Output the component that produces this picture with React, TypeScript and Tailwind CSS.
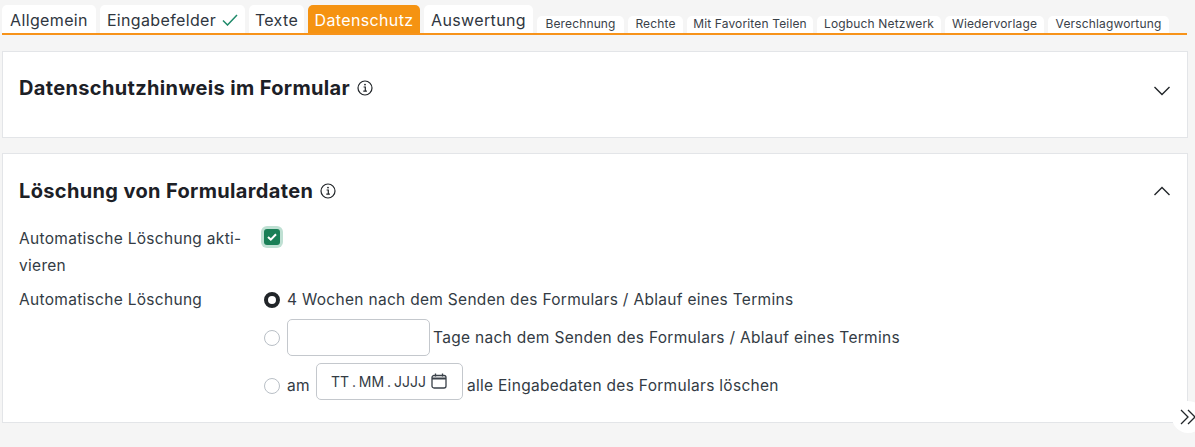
import React from "react";

const big = [
  { t: "Allgemein", w: "w-[94px]" },
  { t: "Eingabefelder", w: "w-[145px]", check: true },
  { t: "Texte", w: "w-[55px]" },
  { t: "Datenschutz", w: "w-[112px]", active: true },
  { t: "Auswertung", w: "w-[109px]" },
];
const small = [
  { t: "Berechnung", w: "w-[87px]" },
  { t: "Rechte", w: "w-[55px]" },
  { t: "Mit Favoriten Teilen", w: "w-[126px]" },
  { t: "Logbuch Netzwerk", w: "w-[124px]" },
  { t: "Wiedervorlage", w: "w-[99px]" },
  { t: "Verschlagwortung", w: "w-[121px]" },
];

function Info() {
  return (
    <svg width="16" height="16" viewBox="0 0 16 16" fill="none" stroke="#212529" className="shrink-0">
      <circle cx="8" cy="8" r="7" strokeWidth="1.2" />
      <path d="M6.6 7h1.7v4M6.3 11.2h3.6" strokeWidth="1.2" />
      <circle cx="8" cy="4.6" r="0.9" fill="#212529" stroke="none" />
    </svg>
  );
}

function Chevron({ up }: { up?: boolean }) {
  return (
    <svg width="16" height="10" viewBox="0 0 16 10" fill="none" stroke="#212529" strokeWidth="1.4" className="shrink-0">
      <path d={up ? "M0.5 9 8 1.5 15.5 9" : "M0.5 1 8 8.5 15.5 1"} />
    </svg>
  );
}

function Radio({ checked }: { checked?: boolean }) {
  return checked ? (
    <span className="w-4 h-4 rounded-full border-[4.5px] border-[#212529] bg-white shrink-0" />
  ) : (
    <span className="w-4 h-4 rounded-full border border-[#b9bfc6] bg-white shrink-0" />
  );
}

export default function App() {
  return (
    <div className="relative h-[447px] w-[1195px] overflow-hidden bg-[#f5f5f5] pt-[5px] text-[#333b44] font-['Inter','Liberation_Sans',sans-serif]">
      <div className="ml-[2px] flex h-[30px] w-[1185px] items-end border-b-2 border-[#f7931a]">
        <div className="flex items-end gap-[4px]">
          {big.map((b) => (
            <div
              key={b.t}
              className={`${b.w} flex h-[28px] items-center justify-center gap-[6px] rounded-t-[5px] pt-[1px] text-[16px] tracking-[0.35px] ${
                b.active ? "bg-[#f59312] text-white" : "bg-white text-[#2f3640]"
              }`}
            >
              {b.t}
              {b.check && (
                <svg width="16" height="12" viewBox="0 0 16 12" fill="none" stroke="#1f8a6a" strokeWidth="1.5">
                  <path d="M1 6.5 5.5 11 15 1" />
                </svg>
              )}
            </div>
          ))}
        </div>
        <div className="ml-[4px] flex items-end gap-[4px]">
          {small.map((b) => (
            <div
              key={b.t}
              className={`${b.w} flex h-[17px] items-center justify-center rounded-t-[5px] bg-white pb-[2px] text-[12px] tracking-[0.15px] text-[#3a4149]`}
            >
              {b.t}
            </div>
          ))}
        </div>
      </div>

      <section className="mx-[2px] mt-[16px] flex h-[87px] w-[1186px] items-start justify-between border border-[#e3e5e8] bg-white pl-[16px] pr-[17px] pt-[24px]">
        <h2 className="flex items-center gap-[7px] text-[20px] leading-[24px] font-bold tracking-[0.35px] text-[#1c2026]">
          Datenschutzhinweis im Formular <Info />
        </h2>
        <div className="mt-[10px]">
          <Chevron />
        </div>
      </section>

      <section className="mx-[2px] mt-[15px] h-[270px] w-[1186px] border border-[#e3e5e8] bg-white pl-[16px] pr-[17px] pt-[25px]">
        <div className="flex items-start justify-between">
          <h2 className="flex items-center gap-[7px] text-[20px] leading-[24px] font-bold tracking-[0.35px] text-[#1c2026]">
            Löschung von Formulardaten <Info />
          </h2>
          <div className="mt-[7px]">
            <Chevron up />
          </div>
        </div>
        <div className="mt-[22px] flex text-[15.5px] leading-[27px] tracking-[0.3px]">
          <div className="w-[245px]">
            Automatische Löschung akti-
            <br />
            vieren
          </div>
          <div className="-ml-[3px] pt-[1px]">
            <span className="flex h-[22px] w-[22px] items-center justify-center rounded-[6px] bg-[#bfe0d3]">
              <span className="flex h-4 w-4 items-center justify-center rounded-[3px] bg-[#197f56]">
                <svg width="10" height="8" viewBox="0 0 10 8" fill="none" stroke="#fff" strokeWidth="2">
                  <path d="M1 4 3.8 6.6 9 1.2" />
                </svg>
              </span>
            </span>
          </div>
        </div>
        <div className="mt-[7px] flex text-[15.5px] leading-[27px] tracking-[0.3px]">
          <div className="w-[245px]">Automatische Löschung</div>
          <div className="flex flex-col">
            <div className="flex h-[27px] items-center gap-[7px]">
              <Radio checked />
              <span>4 Wochen nach dem Senden des Formulars / Ablauf eines Termins</span>
            </div>
            <div className="mt-[6px] flex items-center gap-[7px]">
              <Radio />
              <input className="h-[37px] w-[143px] rounded-[5px] border border-[#c4c8cd] bg-white" />
              <span className="-ml-[4px]">Tage nach dem Senden des Formulars / Ablauf eines Termins</span>
            </div>
            <div className="mt-[7px] flex items-center gap-[7px]">
              <Radio />
              <span>am</span>
              <div className="-ml-[1px] mb-[8px] flex h-[37px] w-[147px] items-center rounded-[5px] border border-[#c4c8cd] bg-white pl-[14px] pr-[15px]">
                <span className="text-[14px] tracking-[0px] [word-spacing:-1px]">TT . MM . JJJJ</span>
                <svg width="16" height="16" viewBox="0 0 16 16" fill="none" stroke="#3a4149" strokeWidth="1.3" className="ml-auto -mt-[1px]">
                  <rect x="1" y="2.5" width="14" height="12.5" rx="2" />
                  <path d="M1 5.5h14" strokeWidth="2" />
                  <path d="M4.5 0.5v3M11.5 0.5v3" />
                </svg>
              </div>
              <span className="-ml-[3px]">alle Eingabedaten des Formulars löschen</span>
            </div>
          </div>
        </div>
      </section>

      <div className="absolute left-[1172px] top-[401px] flex h-8 w-8 items-center justify-center rounded-full bg-white">
        <svg width="16" height="16" viewBox="0 0 16 16" fill="none" stroke="#212529" strokeWidth="1.3">
          <path d="M1 1 8 8 1 15M8 1l7 7-7 7" />
        </svg>
      </div>
    </div>
  );
}
